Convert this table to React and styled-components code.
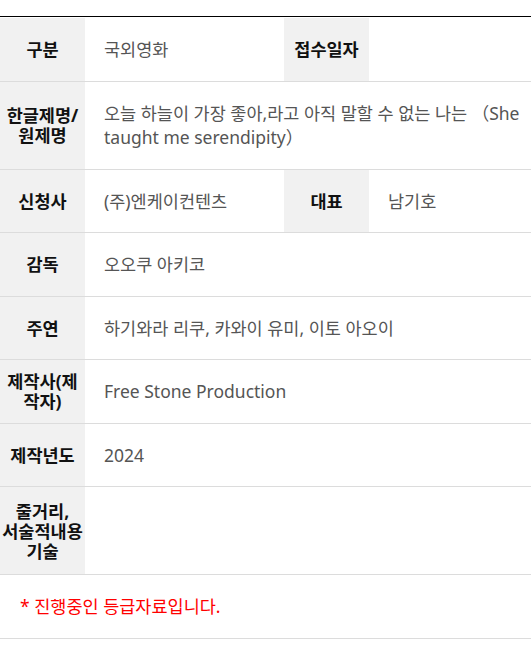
import React from "react";
import styled, { createGlobalStyle } from "styled-components";

const Global = createGlobalStyle`
  html, body { margin: 0; padding: 0; background: #fff; }
  body { font-family: "Noto Sans", "Noto Sans CJK KR", sans-serif; }
`;

const Page = styled.div`
  padding-top: 16px;
`;

const Table = styled.div`
  border-top: 1px solid #000;
  padding-top: 1px;
`;

const Row = styled.div`
  display: grid;
  grid-template-columns: ${(p) => (p.$split ? "85px 199px 85px 1fr" : "85px 1fr")};
  border-bottom: 1px solid #dcdcdc;
`;

const Label = styled.div`
  display: flex;
  align-items: center;
  justify-content: center;
  text-align: center;
  background: #f1f1f1;
  padding: 10px 1px;
  font-size: 17.5px;
  line-height: 20px;
  font-weight: 700;
  color: #111;
  white-space: pre-line;
`;

const Value = styled.div`
  display: flex;
  align-items: center;
  padding: 19px 8px 19px 19px;
  min-height: ${(p) => (p.$tall ? "49px" : "0")};
  font-size: 17.5px;
  line-height: 24.5px;
  color: #555;
  min-width: 0;
`;

const Notice = styled.div`
  padding: 19px 20px;
  font-size: 17.5px;
  line-height: 24.5px;
  color: #ff0000;
  border-bottom: 1px solid #dcdcdc;
`;

const rows = [
  { split: true, cells: [["구분", "국외영화"], ["접수일자", ""]] },
  { cells: [["한글제명/\n원제명", "오늘 하늘이 가장 좋아,라고 아직 말할 수 없는 나는 （She taught me serendipity）"]] },
  { split: true, cells: [["신청사", "(주)엔케이컨텐츠"], ["대표", "남기호"]] },
  { cells: [["감독", "오오쿠 아키코"]] },
  { cells: [["주연", "하기와라 리쿠, 카와이 유미, 이토 아오이"]] },
  { cells: [["제작사(제작자)", "Free Stone Production"]] },
  { cells: [["제작년도", "2024"]] },
  { tall: true, cells: [["줄거리,\n서술적내용\n기술", ""]] },
];

export default function App() {
  return (
    <Page>
      <Global />
      <Table>
        {rows.map((r, i) => (
          <Row key={i} $split={r.split}>
            {r.cells.map(([l, v], j) => (
              <React.Fragment key={j}>
                <Label>{l}</Label>
                <Value $tall={r.tall}>{v}</Value>
              </React.Fragment>
            ))}
          </Row>
        ))}
      </Table>
      <Notice>* 진행중인 등급자료입니다.</Notice>
    </Page>
  );
}
